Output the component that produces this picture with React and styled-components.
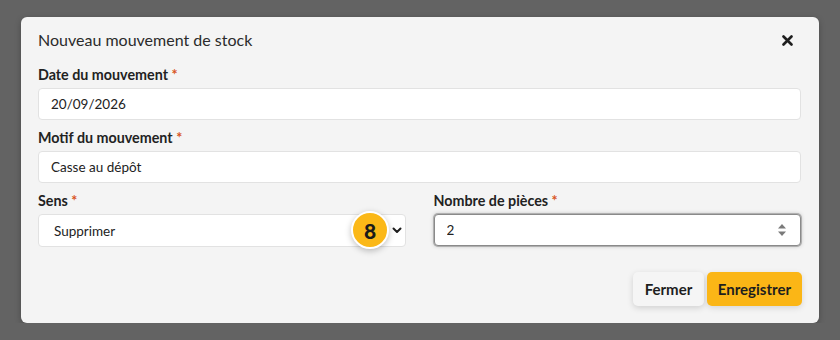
import React from "react";
import styled, { createGlobalStyle } from "styled-components";

const GlobalStyle = createGlobalStyle`
  html, body {
    margin: 0;
    padding: 0;
    background: #636363;
    font-family: "Lato", "Noto Sans", sans-serif;
  }
  * { box-sizing: border-box; }
`;

const Field = ({ label, children }) => (
  <FieldWrap>
    <Label>
      {label} <Required>*</Required>
    </Label>
    {children}
  </FieldWrap>
);

const App = () => {
  return (
    <>
      <GlobalStyle />
      <Modal>
        <Header>
          <Title>Nouveau mouvement de stock</Title>
          <CloseBtn aria-label="Fermer">
            <svg width="11" height="11" viewBox="0 0 11 11">
              <path d="M1.5 1.5 L9.5 9.5 M9.5 1.5 L1.5 9.5" stroke="#1e1e1e" strokeWidth="2.6" strokeLinecap="round" />
            </svg>
          </CloseBtn>
        </Header>
        <Body>
          <Field label="Date du mouvement">
            <Input defaultValue="20/09/2026" />
          </Field>
          <Field label="Motif du mouvement">
            <Input defaultValue="Casse au dépôt" />
          </Field>
          <Row>
            <Field label="Sens">
              <SelectWrap>
                <Select defaultValue="del">
                  <option value="del">Supprimer</option>
                  <option value="add">Ajouter</option>
                </Select>
                <Badge>8</Badge>
                <Chevron width="10" height="7" viewBox="0 0 10 7">
                  <path d="M1.5 1.5 L5 5 L8.5 1.5" fill="none" stroke="#1e1e1e" strokeWidth="2" strokeLinecap="round" strokeLinejoin="round" />
                </Chevron>
              </SelectWrap>
            </Field>
            <Field label="Nombre de pièces">
              <SelectWrap>
                <Input defaultValue="2" focused />
                <Spinner width="10" height="14" viewBox="0 0 10 14">
                  <path d="M5 1 L9 5.5 L1 5.5 Z" fill="#7a7a7a" />
                  <path d="M1 8.5 L9 8.5 L5 13 Z" fill="#7a7a7a" />
                </Spinner>
              </SelectWrap>
            </Field>
          </Row>
        </Body>
        <Footer>
          <Button>Fermer</Button>
          <Button primary>Enregistrer</Button>
        </Footer>
      </Modal>
    </>
  );
};

export default App;

const Modal = styled.div`
  width: 798px;
  height: 306px;
  margin: 17px 0 0 21px;
  background: #f4f4f4;
  border-radius: 6px;
  display: flex;
  flex-direction: column;
  box-shadow: 0 2px 6px rgba(0, 0, 0, 0.25);
`;

const Header = styled.div`
  display: flex;
  align-items: center;
  justify-content: space-between;
  padding: 13px 26px 0 17px;
  height: 33px;
`;

const Title = styled.h1`
  margin: 0;
  font-size: 16px;
  line-height: 20px;
  font-weight: 400;
  color: #2b2b2b;
`;

const CloseBtn = styled.button`
  border: none;
  background: none;
  padding: 0;
  display: flex;
  cursor: pointer;
`;

const Body = styled.div`
  padding: 16px 18px 0 17px;
  display: flex;
  flex-direction: column;
  gap: 9px;
`;

const FieldWrap = styled.div`
  display: flex;
  flex-direction: column;
  gap: 4px;
  flex: 1;
`;

const Label = styled.label`
  font-size: 14.3px;
  line-height: 18px;
  font-weight: 700;
  color: #222;
`;

const Required = styled.span`
  color: #d8541e;
`;

const Input = styled.input`
  width: 100%;
  height: 32px;
  padding: 0 12px;
  border: 1px solid ${(p) => (p.focused ? "#8a8a8a" : "#e2e2e2")};
  border-radius: 4px;
  background: #fff;
  font-family: inherit;
  font-size: 13.5px;
  color: #222;
  outline: none;
  box-shadow: ${(p) =>
    p.focused ? "0 0 0 1px #b0b0b0, 0 0 4px rgba(0,0,0,0.25)" : "none"};
`;

const Row = styled.div`
  display: flex;
  gap: 28px;
`;

const SelectWrap = styled.div`
  position: relative;
`;

const Select = styled.select`
  appearance: none;
  width: 100%;
  height: 33px;
  padding: 0 15px;
  border: 1px solid #e2e2e2;
  border-radius: 4px;
  background: #fff;
  font-family: inherit;
  font-size: 13.5px;
  color: #222;
  outline: none;
`;

const Chevron = styled.svg`
  position: absolute;
  right: 4px;
  top: 13px;
  pointer-events: none;
`;

const Spinner = styled.svg`
  position: absolute;
  right: 14px;
  top: 9px;
  pointer-events: none;
`;

const Badge = styled.div`
  position: absolute;
  left: 313px;
  top: -3px;
  width: 38px;
  height: 38px;
  border-radius: 50%;
  background: #fbb817;
  border: 2px solid #fff;
  box-shadow: 0 2px 6px rgba(0, 0, 0, 0.25);
  display: flex;
  align-items: center;
  justify-content: center;
  font-size: 21px;
  font-weight: 900;
  color: #1a1a1a;
`;

const Footer = styled.div`
  margin-top: auto;
  padding: 0 17px 17px;
  display: flex;
  justify-content: flex-end;
  gap: 3px;
`;

const Button = styled.button`
  height: 34px;
  padding: 0 ${(p) => (p.primary ? 11 : 11.5)}px;
  border: none;
  border-radius: 5px;
  font-family: inherit;
  font-size: 15px;
  font-weight: 700;
  color: #1e1e1e;
  cursor: pointer;
  background: ${(p) => (p.primary ? "#fbb616" : "#f5f5f5")};
  box-shadow: 0 2px 6px rgba(0, 0, 0, ${(p) => (p.primary ? 0.12 : 0.15)});
`;
